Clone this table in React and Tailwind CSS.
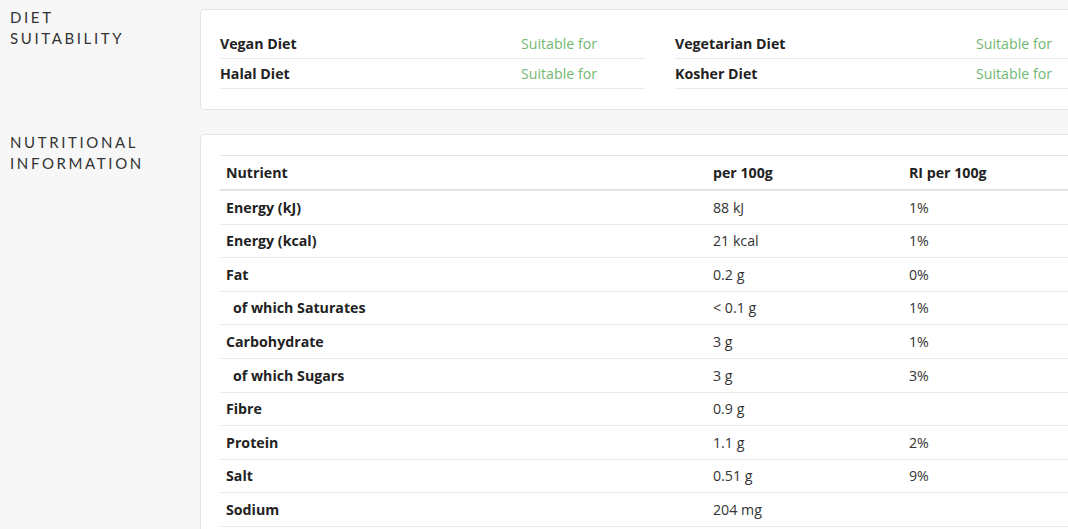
const diets = [
  ['Vegan Diet', 'Suitable for'],
  ['Vegetarian Diet', 'Suitable for'],
  ['Halal Diet', 'Suitable for'],
  ['Kosher Diet', 'Suitable for'],
]

const nutrients = [
  { name: 'Energy (kJ)', per: '88 kJ', ri: '1%' },
  { name: 'Energy (kcal)', per: '21 kcal', ri: '1%' },
  { name: 'Fat', per: '0.2 g', ri: '0%' },
  { name: 'of which Saturates', per: '< 0.1 g', ri: '1%', sub: true },
  { name: 'Carbohydrate', per: '3 g', ri: '1%' },
  { name: 'of which Sugars', per: '3 g', ri: '3%', sub: true },
  { name: 'Fibre', per: '0.9 g', ri: '' },
  { name: 'Protein', per: '1.1 g', ri: '2%' },
  { name: 'Salt', per: '0.51 g', ri: '9%' },
  { name: 'Sodium', per: '204 mg', ri: '' },
]

function SectionLabel({ children }) {
  return (
    <h2 className="w-[200px] shrink-0 pl-[10px] font-['Lato',sans-serif] text-[15px] leading-[21px] font-normal tracking-[0.175em] text-[#333] uppercase">
      {children}
    </h2>
  )
}

export default function App() {
  return (
    <div className="h-[529px] w-[1068px] overflow-hidden bg-[#f7f7f7] font-['Open_Sans',sans-serif] text-[14.2px] text-[#222]">
      {/* Diet suitability */}
      <section className="flex pt-[7px]">
        <SectionLabel>
          Diet
          <br />
          Suitability
        </SectionLabel>
        <div className="mt-[2px] w-[920px] shrink-0 rounded-[4px] border border-[#e3e3e3] bg-white px-[19px] pt-[19px] pb-[20px]">
          <div className="grid grid-cols-2 gap-x-[30px]">
            {diets.map(([name, value]) => (
              <div key={name} className="flex h-[30px] items-center border-b border-[#e8e8e8]">
                <span className="w-[301px] font-bold">{name}</span>
                <span className="text-[#72b872]">{value}</span>
              </div>
            ))}
          </div>
        </div>
      </section>

      {/* Nutritional information */}
      <section className="flex pt-[22px]">
        <SectionLabel>
          Nutritional
          <br />
          Information
        </SectionLabel>
        <div className="mt-[2px] w-[920px] shrink-0 rounded-[4px] border border-[#e3e3e3] bg-white px-[19px] pt-[20px] pb-[20px]">
          <div className="border-t border-[#e5e5e5]">
            <div className="grid h-[35px] grid-cols-[487px_196px_1fr] items-center border-b-2 border-[#e3e3e3] font-bold">
              <span className="pl-[6px]">Nutrient</span>
              <span className="pl-[6px]">per 100g</span>
              <span className="pl-[6px]">RI per 100g</span>
            </div>
            {nutrients.map((n) => (
              <div
                key={n.name}
                className="grid h-[33.6px] grid-cols-[487px_196px_1fr] items-center border-b border-[#e8e8e8] text-[#333]"
              >
                <span className={n.sub ? 'pl-[13px] font-bold text-[#222]' : 'pl-[6px] font-bold text-[#222]'}>{n.name}</span>
                <span className="pl-[6px]">{n.per}</span>
                <span className="pl-[6px]">{n.ri}</span>
              </div>
            ))}
          </div>
        </div>
      </section>
    </div>
  )
}
